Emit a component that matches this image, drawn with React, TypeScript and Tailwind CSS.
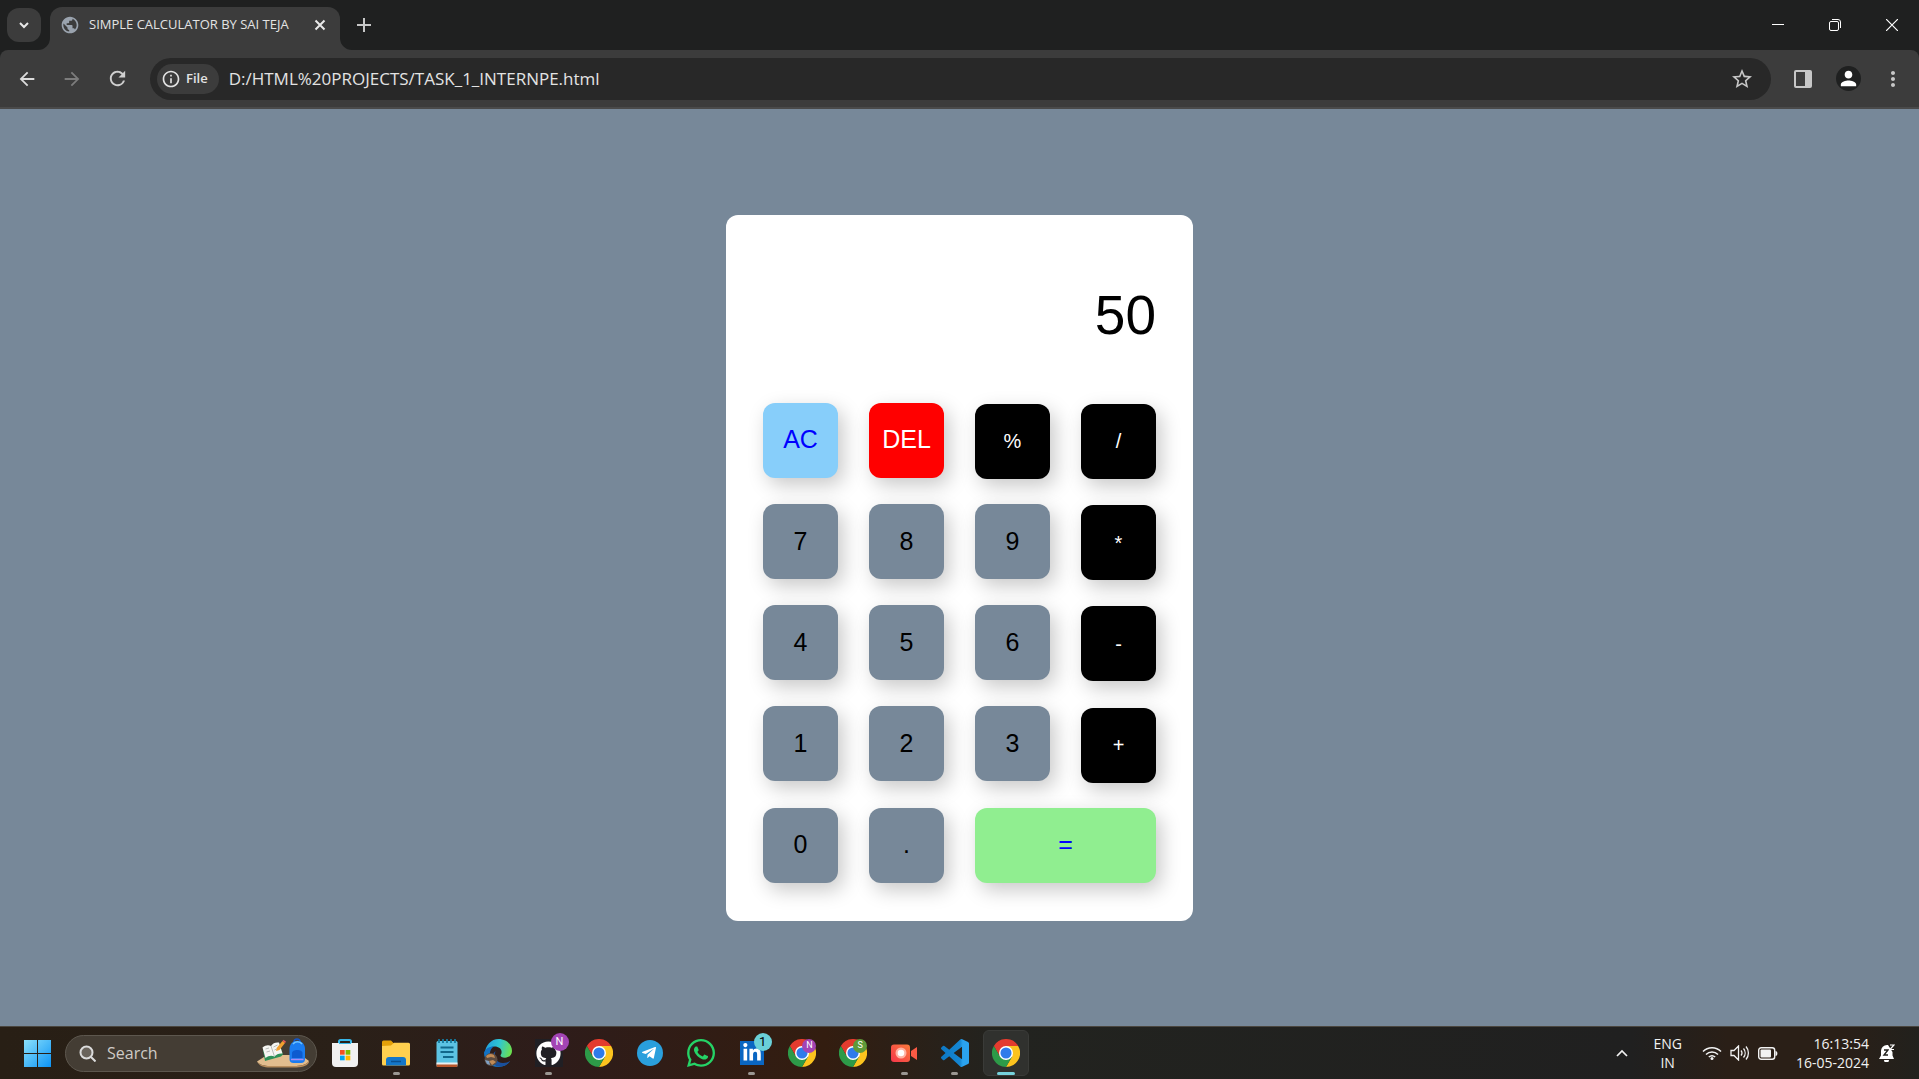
import React from "react";
import { FaGithub, FaLinkedinIn, FaTelegramPlane, FaWhatsapp } from "react-icons/fa";
import {
  MdArrowBack,
  MdArrowForward,
  MdInfoOutline,
  MdMoreVert,
  MdPerson,
  MdPublic,
  MdRefresh,
  MdStarBorder,
} from "react-icons/md";

/* ---------- Browser chrome ---------- */

function TabFoot({ side }: { side: "left" | "right" }) {
  return (
    <svg
      viewBox="0 0 12 12"
      aria-hidden="true"
      className={side === "left" ? "absolute -left-3 bottom-0 size-3" : "absolute -right-3 bottom-0 size-3"}
    >
      <path d={side === "left" ? "M12 0V12H0A12 12 0 0 0 12 0Z" : "M0 0V12H12A12 12 0 0 1 0 0Z"} fill="#3c3c3c" />
    </svg>
  );
}

function TabStrip() {
  return (
    <div className="flex h-[50px] bg-[#1f2020]">
      <button aria-label="Search tabs" className="mt-2 ml-[7px] flex size-[34px] items-center justify-center rounded-xl bg-[#3c3c3c]">
        <svg viewBox="0 0 12 12" className="size-3" fill="none" stroke="#e8e8e8" strokeWidth="2">
          <path d="M2 4l4 4 4-4" />
        </svg>
      </button>
      <div className="relative mt-[7px] ml-[9px] flex w-[290px] items-center rounded-t-xl bg-[#3c3c3c] pr-3 pb-2 pl-[10px]">
        <TabFoot side="left" />
        <TabFoot side="right" />
        <MdPublic className="size-5 shrink-0 text-[#9aa3ae]" />
        <span className="ml-[9px] flex-1 text-[13px] whitespace-nowrap text-[#e3e3e3]">SIMPLE CALCULATOR BY SAI TEJA</span>
        <button aria-label="Close tab" className="flex size-4 items-center justify-center">
          <svg viewBox="0 0 12 12" className="size-3" fill="none" stroke="#e8e8e8" strokeWidth="2">
            <path d="M1.500 1.500l9 9M10.500 1.500l-9 9" />
          </svg>
        </button>
      </div>
      <button aria-label="New tab" className="mt-[18px] ml-[17px] size-[14px]">
        <svg viewBox="0 0 14 14" className="size-[14px]" stroke="#c7c7c7" strokeWidth="2">
          <path d="M7 0V14M0 7H14" />
        </svg>
      </button>
      <div className="ml-auto flex h-[50px] items-center gap-[45px] pr-[21px]">
        <button aria-label="Minimize">
          <svg viewBox="0 0 12 12" className="size-3" stroke="#fff" strokeWidth="1">
            <path d="M0 5.500H12" />
          </svg>
        </button>
        <button aria-label="Restore">
          <svg viewBox="0 0 12 12" className="size-3" fill="none" stroke="#fff" strokeWidth="1">
            <rect x=".5" y="2.500" width="9" height="9" rx="1.500" />
            <path d="M3 .5H9A2.500 2.500 0 0 1 11.500 3V9" />
          </svg>
        </button>
        <button aria-label="Close">
          <svg viewBox="0 0 12 12" className="size-3" fill="none" stroke="#fff" strokeWidth="1.200">
            <path d="M0 0L12 12M12 0L0 12" />
          </svg>
        </button>
      </div>
    </div>
  );
}

function Toolbar() {
  return (
    <div className="bg-[#1f2020]">
      <div className="flex h-[59px] items-center rounded-t-lg border-b-2 border-[#4a4a4a] bg-[#3c3c3c] pr-[14px] pl-4">
        <button aria-label="Back">
          <MdArrowBack className="size-[22px] text-[#dcdcdc]" />
        </button>
        <button aria-label="Forward" className="ml-[23px]">
          <MdArrowForward className="size-[22px] text-[#7c7c7c]" />
        </button>
        <button aria-label="Reload" className="ml-[23px]">
          <MdRefresh className="size-[23px] text-[#cfcfcf]" />
        </button>
        <div className="ml-[21px] flex h-[42px] flex-1 items-center rounded-full bg-[#282828] pr-[17px] pl-[7px]">
          <button className="flex h-[30px] items-center gap-[5px] rounded-full bg-[#3c3c3c] pr-[11px] pl-1 text-[13px] font-semibold text-[#e3e3e3]">
            <MdInfoOutline className="size-5" />
            File
          </button>
          <input
            aria-label="Address"
            readOnly
            value="D:/HTML%20PROJECTS/TASK_1_INTERNPE.html"
            className="ml-[10px] flex-1 bg-transparent text-[17px] leading-6 text-[#e3e3e3] outline-none"
          />
          <button aria-label="Bookmark this page">
            <MdStarBorder className="size-6 text-[#c7c7c7]" />
          </button>
        </div>
        <button aria-label="Side panel" className="ml-[23px]">
          <svg viewBox="0 0 18 18" className="size-[18px]">
            <rect width="18" height="18" rx="2" fill="#c7c7c7" />
            <rect x="2" y="2" width="9" height="14" fill="#3c3c3c" />
          </svg>
        </button>
        <button aria-label="Profile" className="ml-6 flex size-[25px] items-center justify-center rounded-full bg-[#1f2020]">
          <MdPerson className="size-[23px] text-white" />
        </button>
        <button aria-label="Menu" className="ml-5">
          <MdMoreVert className="size-6 text-[#c7c7c7]" />
        </button>
      </div>
    </div>
  );
}

/* ---------- Calculator ---------- */

type Key = { label: string; className: string };

const NUM = "w-[75px] text-[25px] bg-[#778899] text-black";
const OP = "w-[75px] text-xl bg-black text-white";
const num = (label: string): Key => ({ label, className: NUM });
const op = (label: string): Key => ({ label, className: OP });

const KEYS: Key[] = [
  { label: "AC", className: "w-[75px] text-[25px] bg-[#87cefa] text-[#0000ff]" },
  { label: "DEL", className: "w-[75px] text-[25px] bg-[#ff0000] text-white" },
  op("%"),
  op("/"),
  num("7"),
  num("8"),
  num("9"),
  op("*"),
  num("4"),
  num("5"),
  num("6"),
  op("-"),
  num("1"),
  num("2"),
  num("3"),
  op("+"),
  num("0"),
  num("."),
  { label: "=", className: "col-span-2 w-full text-[25px] bg-[#90ee90] text-[#0000ff]" },
];

function Calculator() {
  return (
    <div className="rounded-xl bg-white px-[37px] py-[38px] font-['Liberation_Sans',Arial,sans-serif]">
      <div className="grid grid-cols-[repeat(4,75px)] items-baseline gap-x-[31px] gap-y-[25px]">
        <input
          aria-label="Result"
          readOnly
          value="50"
          className="col-span-4 h-[125px] w-full bg-transparent text-right text-[55px] text-black outline-none"
        />
        {KEYS.map((k) => (
          <button
            key={k.label}
            className={`h-[75px] rounded-xl shadow-[5px_7px_20px_rgba(0,0,0,0.22)] ${k.className}`}
          >
            {k.label}
          </button>
        ))}
      </div>
    </div>
  );
}

/* ---------- Taskbar icons ---------- */

function Chrome() {
  return (
    <svg viewBox="0 0 48 48" className="size-7">
      <path d="M3.200 12A24 24 0 0 1 44.800 12H24V24L13.600 30Z" fill="#e33b2e" />
      <path d="M44.800 12A24 24 0 0 1 24 48L34.400 30 24 24V12Z" fill="#fcc31e" />
      <path d="M24 48A24 24 0 0 1 3.200 12L13.600 30 24 24 34.400 30Z" fill="#2d9a48" />
      <circle cx="24" cy="24" r="12" fill="#fff" />
      <circle cx="24" cy="24" r="9.500" fill="#2f7bea" />
    </svg>
  );
}

function Windows() {
  return (
    <svg viewBox="0 0 27 27" className="size-[27px]">
      <defs>
        <linearGradient id="win" gradientUnits="userSpaceOnUse" x1="0" y1="0" x2="27" y2="27">
          <stop stopColor="#8be1fb" />
          <stop offset="1" stopColor="#0c93f5" />
        </linearGradient>
      </defs>
      <path d="M0 0h13v13H0zM14 0h13v13H14zM0 14h13v13H0zM14 14h13v13H14z" fill="url(#win)" />
    </svg>
  );
}

function Store() {
  return (
    <svg viewBox="0 0 28 28" className="size-7">
      <path d="M8 6V2.500A1.500 1.500 0 0 1 9.500 1h9A1.500 1.500 0 0 1 20 2.500V6" fill="none" stroke="#38b6e8" strokeWidth="2" />
      <path d="M1 4h26v20a4 4 0 0 1-4 4H5a4 4 0 0 1-4-4z" fill="#f1f1f1" />
      <path d="M8 4h12v1H8z" fill="#38b6e8" />
      <path d="M9 11h4.700v4.700H9z" fill="#f25022" />
      <path d="M14.600 11h4.700v4.700h-4.700z" fill="#7fba00" />
      <path d="M9 16.600h4.700v4.700H9z" fill="#00a4ef" />
      <path d="M14.600 16.600h4.700v4.700h-4.700z" fill="#ffb900" />
    </svg>
  );
}

function Folder() {
  return (
    <svg viewBox="0 0 28 28" className="size-7">
      <path d="M0 3a1.500 1.500 0 0 1 1.500-1.500H9L12 4.500V8H0z" fill="#e3a008" />
      <path d="M0 7l9-.5 3-2.700h14.500A1.500 1.500 0 0 1 28 5.300V25a1.500 1.500 0 0 1-1.500 1.500h-25A1.500 1.500 0 0 1 0 25z" fill="#ffd04f" />
      <path d="M4 26.500V21a3 3 0 0 1 3-3h14a3 3 0 0 1 3 3v5.500z" fill="#1477c9" />
      <path d="M9 22.500h10" stroke="#0a4f8f" strokeWidth="1.500" />
    </svg>
  );
}

function Notepad() {
  return (
    <svg viewBox="0 0 22 28" className="h-7 w-[22px]">
      <rect x=".5" y="2" width="21" height="26" rx="1.500" fill="#5cc3e3" />
      <path d="M.5 24.500h21V27a1 1 0 0 1-1 1h-19a1 1 0 0 1-1-1z" fill="#b8562b" />
      <path d="M.5 23.500h21v2H.5z" fill="#e9eef0" />
      <path d="M3 0v4M7 0v4M11 0v4M15 0v4M19 0v4" stroke="#157a9e" strokeWidth="1.800" />
      <path d="M4.500 8.500h13M4.500 13h13M7 18h10.500" stroke="#11688b" strokeWidth="1.800" />
    </svg>
  );
}

function Edge() {
  return (
    <svg viewBox="0 0 28 28" className="size-7">
      <defs>
        <linearGradient id="edgeTop" x1="0" y1="0.300" x2="1" y2="0.500">
          <stop stopColor="#1f9fe0" />
          <stop offset="0.500" stopColor="#2fc6d2" />
          <stop offset="1" stopColor="#6ce04e" />
        </linearGradient>
      </defs>
      <path d="M1 17C0 7 7 0 14.500 0 22.500 0 28 5.500 28 12c0 4-3 6.700-7 6.700-3 0-4.500-1.200-4.500-2.200 0-.8 1.100-1.200 1.100-3.500 0-3-3-5.400-7-5.400C5 7.600 1 12 1 17z" fill="url(#edgeTop)" />
      <path d="M0 13.500C1.500 9.500 5.500 7.300 10 7.500c-3 1.500-4.500 5-4 9 .7 5 5 9 10.500 9 3.500 0 6.500-1.200 9.700-3.500C23.500 26 19.500 28 14.500 28 6 28 0 22 0 13.500z" fill="#1272c4" />
      <path d="M11.500 12c-2 6 1 12 7.500 12 3 0 5.500-1 7-2-2.500 4-7.500 6-12 5.500-6-1-8-11-2.500-15.500z" fill="#1a4f9c" />
      <circle cx="7" cy="20.500" r="6.500" fill="#5b4b40" />
      <path d="M2 17c2-2 5-3 8-1l1 3-4-1-4 1zM5 22l4-1 3 2-4 3z" fill="#c08a55" />
      <path d="M1 21l4 1 1 4-3-1z" fill="#7fa0c4" />
    </svg>
  );
}

function Badge({ letter, className }: { letter: string; className: string }) {
  return (
    <span className={`absolute flex items-center justify-center rounded-full font-['Roboto',sans-serif] ${className}`}>
      {letter}
    </span>
  );
}

function Recorder() {
  return (
    <svg viewBox="0 0 28 28" className="size-7">
      <defs>
        <linearGradient id="rec" x1="0" y1="1" x2="1" y2="0">
          <stop stopColor="#f5364a" />
          <stop offset="1" stopColor="#fb7a3c" />
        </linearGradient>
      </defs>
      <rect x="1" y="5.500" width="19" height="17.500" rx="3" fill="url(#rec)" />
      <path d="M21 12l6-4v13l-6-4z" fill="#fa5a44" />
      <circle cx="11" cy="14" r="5.500" fill="#ffb3a3" />
      <circle cx="11" cy="14" r="3.300" fill="#fff" />
    </svg>
  );
}

function VSCode() {
  return (
    <svg viewBox="0 0 24 24" className="size-7">
      <defs>
        <linearGradient id="vsc">
          <stop stopColor="#0d78c4" />
          <stop offset="0.680" stopColor="#1587d3" />
          <stop offset="0.780" stopColor="#2ba3ef" />
        </linearGradient>
      </defs>
      <path
        fill="url(#vsc)"
        d="M23.150 2.587L18.210.21a1.494 1.494 0 0 0-1.705.29l-9.460 8.630-4.120-3.128a.999.999 0 0 0-1.276.057L.327 7.261A1 1 0 0 0 .326 8.740L3.899 12 .326 15.260a1 1 0 0 0 .001 1.479L1.650 17.940a.999.999 0 0 0 1.276.057l4.120-3.128 9.460 8.630a1.492 1.492 0 0 0 1.704.290l4.942-2.377A1.500 1.500 0 0 0 24 20.060V3.939a1.500 1.500 0 0 0-.85-1.352zm-5.146 14.861L10.826 12l7.178-5.448v10.896z"
      />
    </svg>
  );
}

function DeskArt() {
  return (
    <svg viewBox="0 0 52 30" className="h-[30px] w-[52px] shrink-0" aria-hidden="true">
      <path d="M0 23.500L10 17h34l8 6c-2 4-9 5-15 5H13C7 28 2 26.500 0 23.500z" fill="#e2bd8e" />
      <path d="M0 23.500C2 26.500 7 28 13 28h24c6 0 13-1 15-5v1.500c-2 4-8 5-15 5H13c-6 0-11-1.500-13-6z" fill="#b88d5c" />
      <path d="M6 12l2 11 16-4.500 2-2L22 5z" fill="#2f9158" />
      <path d="M5.500 9.500c3-2.500 6-3 8.500-1.500 2-3 4.500-4 8-3.500l3.500 11c-3-.5-6 .5-8 3-3-1.500-6-1-9 1.500z" fill="#f6f6f2" />
      <path d="M14 8l3.500 10.500M8.500 11l3.500-1M9.500 14l3.500-1M16.500 9l4-2M17.500 12l4-2" stroke="#b7bbb8" strokeWidth="1" />
      <path d="M19 13l1-3.500L25.500 3l2.500 2-5.500 7z" fill="#f3a02f" />
      <path d="M25.500 3l1-1.200 2.500 2L28 5z" fill="#ef5a5a" />
      <path d="M37 4c0-4 6-4 6 0" fill="none" stroke="#1456c8" strokeWidth="1.500" />
      <path d="M32.500 11C32.500 0 48 0 48 11v10a4 4 0 0 1-4 4h-7.500a4 4 0 0 1-4-4z" fill="#1a7cf0" />
      <path d="M35 15c0-4 10.500-4 10.500 0v5H35z" fill="#0d5bd0" />
      <path d="M36 6c2-3 7-3 9 0" stroke="#6cc3ff" strokeWidth="1.500" fill="none" />
      <path d="M34 21.500h12.500" stroke="#a98cf5" strokeWidth="1.500" />
    </svg>
  );
}

type App = { name: string; icon: React.ReactNode; running?: boolean; active?: boolean };

const APPS: App[] = [
  { name: "Microsoft Store", icon: <Store /> },
  { name: "File Explorer", icon: <Folder />, running: true },
  { name: "Notepad", icon: <Notepad /> },
  { name: "Edge", icon: <Edge /> },
  {
    name: "GitHub",
    running: true,
    icon: (
      <>
        <span className="flex size-7 items-center justify-center bg-[#201f24]">
          <FaGithub className="size-[25px] text-white" />
        </span>
        <Badge letter="N" className="-top-1.5 -right-1.5 size-[18px] bg-[#a344b4] text-[11px] text-white" />
      </>
    ),
  },
  { name: "Chrome", icon: <Chrome /> },
  {
    name: "Telegram",
    icon: (
      <span className="flex size-[26px] items-center justify-center rounded-full bg-[#2a9fdc]">
        <FaTelegramPlane className="mr-0.5 size-4 text-white" />
      </span>
    ),
  },
  { name: "WhatsApp", icon: <FaWhatsapp className="size-8 text-[#25d366]" /> },
  {
    name: "LinkedIn",
    running: true,
    icon: (
      <>
        <span className="flex size-6 items-center justify-center bg-[#0a66c2]">
          <FaLinkedinIn className="size-5 text-white" />
        </span>
        <Badge letter="1" className="-top-2 -right-2 size-[18px] bg-[#6ad0d8] text-[13px] text-black" />
      </>
    ),
  },
  {
    name: "Chrome profile N",
    icon: (
      <>
        <Chrome />
        <Badge letter="N" className="top-0 right-0 size-[14px] bg-[#a344b4] text-[9px] text-white" />
      </>
    ),
  },
  {
    name: "Chrome profile S",
    icon: (
      <>
        <Chrome />
        <Badge letter="S" className="top-0 right-0 size-[14px] bg-[#5f9a3a] text-[9px] text-white" />
      </>
    ),
  },
  { name: "Screen recorder", icon: <Recorder />, running: true },
  { name: "Visual Studio Code", icon: <VSCode />, running: true },
  { name: "Chrome window", icon: <Chrome />, active: true },
];

function Taskbar() {
  return (
    <footer className="flex h-[53px] items-center border-t border-[#4a463f] bg-[linear-gradient(90deg,#281f15_0%,#2a2018_18%,#2e1c1a_29%,#331d10_43%,#22231f_52%,#202020_85%,#2a1f17_90%,#2a1f17_96%,#22211d_100%)] pr-6 pl-6 text-[#f2f2f2]">
      <button aria-label="Start">
        <Windows />
      </button>
      <label className="ml-[14px] flex h-[37px] w-[252px] items-center rounded-full border border-[#5d574e] bg-[#443d34] pr-[7px] pl-[13px]">
        <svg viewBox="0 0 17 17" className="size-[17px] shrink-0" fill="none" stroke="#dcdcdc" strokeWidth="2">
          <circle cx="7.500" cy="7.500" r="6" fill="#6a645c" />
          <path d="M12 12l4.500 4.500" />
        </svg>
        <input
          aria-label="Search"
          placeholder="Search"
          className="ml-[11px] w-full min-w-0 bg-transparent text-base outline-none placeholder:text-[#cfcbc6]"
        />
        <DeskArt />
      </label>
      <nav className="ml-[3px] grid h-full w-[711px] grid-cols-14">
        {APPS.map((a) => (
          <div key={a.name} className="flex items-center justify-center">
            <button
              aria-label={a.name}
              className={
                a.active
                  ? "relative flex h-[46px] w-[46px] items-center justify-center rounded-md border border-[#3a3b38] bg-[#30312e]"
                  : "relative flex h-[46px] w-[46px] items-center justify-center"
              }
            >
              <span className="relative flex">{a.icon}</span>
              {a.running && <span className="absolute bottom-px h-[3px] w-[7px] rounded-full bg-[#9b9792]" />}
              {a.active && <span className="absolute bottom-0 h-[3px] w-[18px] rounded-full bg-[#76d2dc]" />}
            </button>
          </div>
        ))}
      </nav>
      <div className="ml-auto flex items-center">
        <button aria-label="Show hidden icons">
          <svg viewBox="0 0 12 8" className="h-2 w-3" fill="none" stroke="#f2f2f2" strokeWidth="1.700">
            <path d="M1 7l5-5 5 5" />
          </svg>
        </button>
        <button className="ml-[25px] text-center text-[14px] leading-[19px]">
          ENG
          <br />
          IN
        </button>
        <button aria-label="Network, sound and battery" className="ml-5 flex items-center gap-2">
          <svg viewBox="0 0 20 14" className="h-[14px] w-5" fill="none" stroke="#f2f2f2" strokeWidth="1.500">
            <path d="M1 5.500a12.500 12.500 0 0 1 18 0M4 8.500a8.500 8.500 0 0 1 12 0M6.800 11a5 5 0 0 1 6.400 0" />
            <circle cx="10" cy="12.500" r="1.500" fill="#f2f2f2" stroke="none" />
          </svg>
          <svg viewBox="0 0 20 16" className="h-4 w-5" fill="none" stroke="#f2f2f2" strokeWidth="1.300">
            <path d="M1 5.500h3L8.500 1v14L4 10.500H1zM11 5.500a4 4 0 0 1 0 5M13.500 3.500a7 7 0 0 1 0 9M16 1.500a10 10 0 0 1 0 13" />
          </svg>
          <svg viewBox="0 0 20 13" className="h-[13px] w-5">
            <rect x=".7" y=".7" width="16" height="11.600" rx="2.500" fill="none" stroke="#f2f2f2" strokeWidth="1.400" />
            <rect x="2.500" y="2.500" width="10.500" height="8" rx="1" fill="#f2f2f2" />
            <path d="M17.500 4c2.500 0 2.500 5 0 5z" fill="#f2f2f2" />
          </svg>
        </button>
        <button className="ml-[18px] text-right text-[14px] leading-[19px]">
          16:13:54
          <br />
          16-05-2024
        </button>
        <button aria-label="Notifications" className="ml-[10px]">
          <svg viewBox="0 0 16 18" className="h-[18px] w-4">
            <path d="M8 1a6 6 0 0 0-6 6v4.500L0 15h15l-1.500-3.500V8L9 1zM5 16h5a2.500 2.500 0 0 1-5 0z" fill="#fff" />
            <path d="M5 6h4l-4 5h4" fill="none" stroke="#22211d" strokeWidth="1.400" />
            <path d="M11 1h4l-4 4.500h4" fill="none" stroke="#fff" strokeWidth="1.200" />
          </svg>
        </button>
      </div>
    </footer>
  );
}

export default function App() {
  return (
    <div className="flex min-h-screen flex-col bg-[#778899] font-['Open_Sans',sans-serif]">
      <header>
        <TabStrip />
        <Toolbar />
      </header>
      <main className="flex flex-1 items-center justify-center">
        <Calculator />
      </main>
      <Taskbar />
    </div>
  );
}
